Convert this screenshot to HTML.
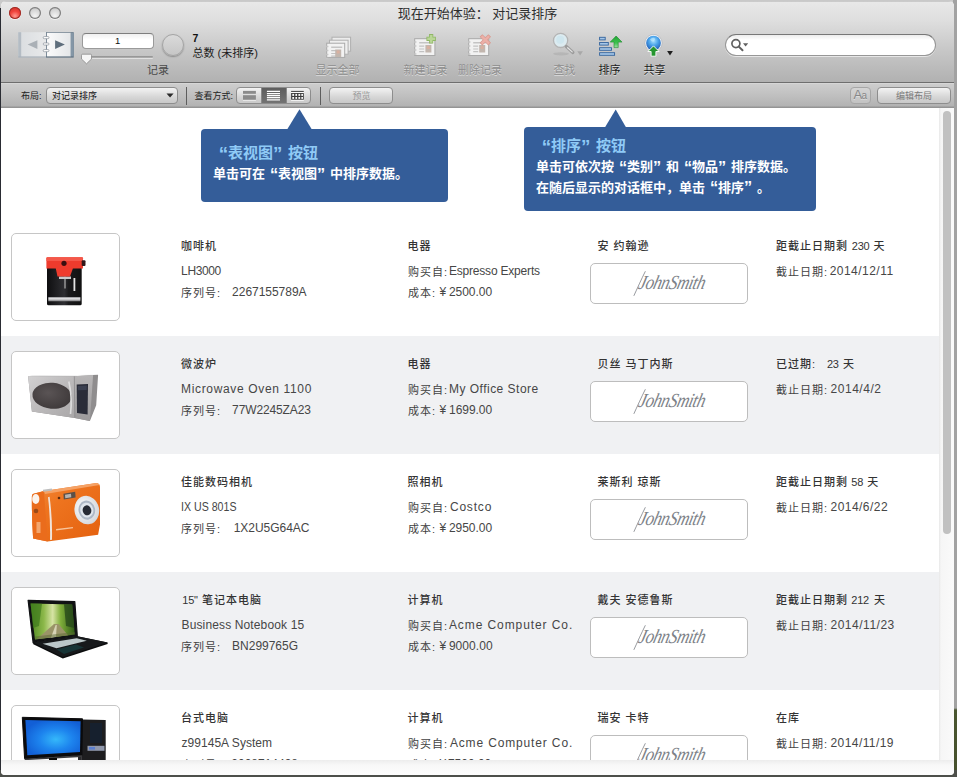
<!DOCTYPE html><html lang="zh-CN"><head><meta charset="utf-8"><title>现在开始体验： 对记录排序</title><style>
*{box-sizing:border-box}
html,body{margin:0;padding:0}
body{width:957px;height:777px;overflow:hidden;position:relative;background:#9f9f9f;font-family:"Liberation Sans","Noto Sans CJK SC",sans-serif;color:#333}
.abs{position:absolute}
#bgtop{left:0;top:0;width:957px;height:8px;background:#c9c9c9}
#bgleft{left:0;top:8px;width:2px;height:769px;background:#2a2c33}
#bgright{left:953px;top:0;width:4px;height:777px;background:linear-gradient(#a2a2a2 0,#a2a2a2 708px,#4a5630 710px,#46502c 777px)}
#bgbot{left:0;top:770px;width:957px;height:7px;background:#4d4f4a}
#win{left:1px;top:1px;width:953px;height:774px;border-radius:5px 5px 4px 4px;overflow:hidden;background:#fff}
#tb{left:0;top:0;width:953px;height:81px;background:linear-gradient(#bcbcbc 0,#e8e8e8 1.5px,#dedede 20px,#c8c8c8 48px,#b1b1b1 81px)}
#tbline{left:0;top:81px;width:953px;height:1px;background:#6e6e6e}
#lb{left:0;top:82px;width:953px;height:25px;background:linear-gradient(#cdcdcd 0,#bfbfbf 12px,#b3b3b3 21.500px,#8c8c8c 24px);border-top:1px solid #d6d6d6}
#content{left:0;top:107px;width:938px;height:652px;background:#fff;overflow:hidden}
#sb{left:938px;top:107px;width:15px;height:652px;background:linear-gradient(90deg,#e8e8e8 0,#f6f6f6 2px,#fafafa 100%)}
#thumb{left:942px;top:110px;width:8px;height:423px;border-radius:4px;background:#c1c1c1}
#foot{left:0;top:759px;width:953px;height:15px;background:linear-gradient(#ececec 0,#f8f8f8 5px,#fdfdfd 15px)}
.tl{width:12px;height:12px;border-radius:50%;top:6px}
.t{position:absolute;white-space:nowrap;line-height:16px;height:16px}
.row{position:absolute;left:0;width:938px;height:118px}
.row.g{background:#f0f1f3}
.pic{position:absolute;left:10px;top:15px;width:109px;height:88px;border:1px solid #c6c6c6;border-radius:5px;background:#fff;overflow:hidden}
.h{font-weight:500;font-size:11px;letter-spacing:1px;color:#333}
.c{font-size:11px;letter-spacing:1px;color:#424242}
.n{font-weight:400;font-size:12px;letter-spacing:0;font-family:"Liberation Sans",sans-serif}
.b{font-size:12px;color:#464646}
.s11{font-size:11px;color:#333}
.sigbox{position:absolute;left:589px;top:45px;width:158px;height:41px;border:1px solid #bdbdbd;border-radius:5px;background:#fff}
.sig{position:absolute;left:34px;top:1px}
.co{position:absolute;background:#345d99;border-radius:4px}
.coh{position:absolute;white-space:nowrap;font-weight:700;font-size:15px;color:#8fcaf6;line-height:20px}
.cob{position:absolute;white-space:nowrap;font-weight:700;font-size:13px;color:#fff;line-height:18px}
.lab{position:absolute;white-space:nowrap;font-size:11px;line-height:14px;color:#222}
.dis{color:#8e8e8e}
.btn{position:absolute;border:1px solid #8d8d8d;border-radius:4px;background:linear-gradient(#f3f3f3,#d6d6d6 60%,#c8c8c8);}
.ql{display:inline-block;width:.8em;text-align:right;font-size:1.25em;line-height:0;position:relative;top:.12em}
.qr{display:inline-block;width:.8em;text-align:left;font-size:1.25em;line-height:0;position:relative;top:.12em}
.tsh{text-shadow:0 1px 0 rgba(255,255,255,.55)}
.sm{position:absolute;white-space:nowrap;font-size:9px;line-height:12px;color:#222}
</style></head><body>
<div id="bgtop" class="abs"></div><div id="bgleft" class="abs"></div><div id="bgright" class="abs"></div><div id="bgbot" class="abs"></div>
<div id="win" class="abs">
<div id="tb" class="abs"></div><div id="tbline" class="abs"></div><div id="lb" class="abs"></div>
<div class="abs tl" style="left:8px;top:5.700px;background:radial-gradient(circle at 50% 75%,#ff9a90 0,#f0443c 45%,#c62a24 100%);box-shadow:0 0 0 1px #9b2f29 inset,0 1px 0 rgba(255,255,255,.55)"></div>
<div class="abs tl" style="left:28px;top:5.700px;background:radial-gradient(circle at 50% 75%,#f4f4f4 0,#d6d6d6 55%,#bdbdbd 100%);box-shadow:0 0 0 1.200px #7f7f7f inset,0 1px 0 rgba(255,255,255,.55)"></div>
<div class="abs tl" style="left:48px;top:5.700px;background:radial-gradient(circle at 50% 75%,#f4f4f4 0,#d6d6d6 55%,#bdbdbd 100%);box-shadow:0 0 0 1.200px #7f7f7f inset,0 1px 0 rgba(255,255,255,.55)"></div>
<div class="abs" id="title" style="left:0;top:3px;width:953px;text-align:center;font-size:13px;line-height:19px;color:#2e2e2e;white-space:nowrap">现在开始体验： 对记录排序</div>
<!-- book nav -->
<svg class="abs" style="left:16px;top:30px" width="60" height="30" viewBox="0 0 60 30">
<defs><linearGradient id="pgL" x1="0" x2="1"><stop offset="0" stop-color="#dadde0"/><stop offset="1" stop-color="#e8e9ea"/></linearGradient>
<linearGradient id="pgR" x1="0" x2="1"><stop offset="0" stop-color="#fbfbfb"/><stop offset="1" stop-color="#e4e6e8"/></linearGradient></defs>
<rect x="1.200" y="1.200" width="28" height="25" fill="url(#pgL)"/>
<rect x="1.200" y="1.200" width="3" height="25" fill="#b4bcc4"/>
<rect x="1.200" y="25.400" width="28" height="1.200" fill="#aab2ba"/>
<rect x="29" y="1.200" width="27.700" height="25.400" fill="#5e7080"/>
<rect x="29.800" y="1.800" width="24" height="23.600" fill="url(#pgR)"/>
<rect x="53.800" y="1.800" width="2.900" height="23.600" fill="#8496a6"/>
<polygon points="10.600,13.600 20.400,9.200 20.400,18" fill="#aab0b6"/>
<polygon points="47.900,13.600 38.100,9.200 38.100,18" fill="#5f6e7c"/>
<rect x="26.200" y="5.5" width="5.800" height="2.200" rx="1.100" fill="#fafafa" stroke="#8c949c" stroke-width="0.700"/>
<rect x="26.200" y="11.9" width="5.800" height="2.200" rx="1.100" fill="#fafafa" stroke="#8c949c" stroke-width="0.700"/>
<rect x="26.200" y="18.5" width="5.800" height="2.200" rx="1.100" fill="#fafafa" stroke="#8c949c" stroke-width="0.700"/>
</svg>
<!-- record field -->
<div class="abs" style="left:80.500px;top:32.200px;width:72.500px;height:15.500px;border:1px solid #9a9a9a;border-top-color:#7e7e7e;border-radius:4px;background:linear-gradient(#f0f0f0,#ffffff 40%);text-align:center;font-size:9.500px;line-height:13px;color:#111">1</div>
<div class="abs" style="left:80.500px;top:54.500px;width:71.500px;height:2.400px;border-radius:1.200px;background:linear-gradient(#8e8e8e,#b4b4b4);box-shadow:0 1px 0 rgba(255,255,255,.5)"></div>
<svg class="abs" style="left:79px;top:51px" width="14" height="13"><path d="M2.500 2.200 H10.500 Q11.500 2.200 11.500 3.200 V7 L6.500 11.800 L1.500 7 V3.200 Q1.500 2.200 2.500 2.200Z" fill="#f6f6f6" stroke="#8a8a8a" stroke-width="0.800"/></svg>
<div class="abs" style="left:160.800px;top:32.800px;width:22.400px;height:22.400px;border-radius:50%;background:linear-gradient(#dadada,#c6c6c6);border:1px solid #a4a4a4;box-shadow:0 1px 1.500px rgba(0,0,0,.28)"></div>
<div class="lab" style="left:191.500px;top:30px;font-weight:700;font-size:10.500px;color:#111">7</div>
<div class="lab" style="left:191.500px;top:44.500px;color:#1c1c1c">总数 (未排序)</div>
<div class="lab" style="left:146px;top:61.500px;color:#4a4a4a">记录</div>
<!-- toolbar buttons -->
<div class="lab dis tsh" style="left:314.500px;top:62px">显示全部</div>
<div class="lab dis tsh" style="left:402.500px;top:62px">新建记录</div>
<div class="lab dis tsh" style="left:457px;top:62px">删除记录</div>
<div class="lab dis tsh" style="left:552.500px;top:62px">查找</div>
<div class="lab tsh" style="left:597.500px;top:62px;color:#1a1a1a">排序</div>
<div class="lab tsh" style="left:642.500px;top:62px;color:#1a1a1a">共享</div>
<!-- icon: show all -->
<svg class="abs" style="left:322px;top:31px" width="32" height="28" viewBox="0 0 32 28">
<rect x="9" y="5.200" width="18.600" height="14" fill="#ececec" stroke="#b0b0b0" stroke-width="1"/>
<rect x="6.500" y="8.200" width="18.600" height="14" fill="#efefef" stroke="#b0b0b0" stroke-width="1"/>
<rect x="3.7" y="11.2" width="18" height="14.2" fill="#f2f2f2" stroke="#a9a9a9" stroke-width="1"/>
<path d="M8.2 15.2h11" stroke="#c4c4c4" stroke-width="1.400"/>
<path d="M8.2 18.7h5M8.2 21.5h5M8.2 24.2h5" stroke="#c2c2c2" stroke-width="1.200"/>
<rect x="12.2" y="17.5" width="6" height="7.500" fill="#c2b6ae"/>
<rect x="13.7" y="18.5" width="3" height="3" fill="#d8b0a0"/>
<path d="M3.2 14.5h2.200M3.2 18.5h2.200M3.2 22.5h2.200M3.2 26.5h2.200" stroke="#c6c6c6" stroke-width="1.600"/>
</svg>
<!-- icon: new record -->
<svg class="abs" style="left:411px;top:31px" width="28" height="27" viewBox="0 0 28 27">
<rect x="2.7" y="6.7" width="20.2" height="16.8" fill="#f2f2f2" stroke="#a9a9a9" stroke-width="1"/>
<path d="M7.2 10.7h13.2" stroke="#c4c4c4" stroke-width="1.400"/>
<path d="M7.2 14.2h5M7.2 17.0h5M7.2 19.7h5" stroke="#c2c2c2" stroke-width="1.200"/>
<rect x="13.399999999999999" y="13.0" width="6" height="7.500" fill="#c2b6ae"/>
<rect x="14.899999999999999" y="14.0" width="3" height="3" fill="#d8b0a0"/>
<path d="M2.2 10.0h2.200M2.2 14.0h2.200M2.2 18.0h2.200M2.2 22.0h2.200" stroke="#c6c6c6" stroke-width="1.600"/>
<path d="M19.150 2.100v9.400M14.450 6.800h9.400" stroke="#8fb765" stroke-width="4.200"/>
<path d="M19.150 2.900v7.800M15.250 6.800h7.800" stroke="#b9d696" stroke-width="2.600"/>
</svg>
<!-- icon: delete record -->
<svg class="abs" style="left:465px;top:31px" width="28" height="27" viewBox="0 0 28 27">
<rect x="2.7" y="6.7" width="20" height="16.8" fill="#f2f2f2" stroke="#a9a9a9" stroke-width="1"/>
<path d="M7.2 10.7h13" stroke="#c4c4c4" stroke-width="1.400"/>
<path d="M7.2 14.2h5M7.2 17.0h5M7.2 19.7h5" stroke="#c2c2c2" stroke-width="1.200"/>
<rect x="13.2" y="13.0" width="6" height="7.500" fill="#c2b6ae"/>
<rect x="14.7" y="14.0" width="3" height="3" fill="#d8b0a0"/>
<path d="M2.2 10.0h2.200M2.2 14.0h2.200M2.2 18.0h2.200M2.2 22.0h2.200" stroke="#c6c6c6" stroke-width="1.600"/>
<path d="M15 3.500l8.700 8.700M23.700 3.500l-8.700 8.700" stroke="#d99a90" stroke-width="3.800"/>
<path d="M15.600 4.100l7.500 7.500M23.100 4.100l-7.500 7.500" stroke="#ecb0a8" stroke-width="2.300"/>
</svg>
<!-- icon: find -->
<svg class="abs" style="left:549px;top:30px" width="36" height="28" viewBox="0 0 36 28">
<ellipse cx="11" cy="22.800" rx="8" ry="1.600" fill="#9a9a9a" opacity="0.35"/>
<circle cx="10.600" cy="9.400" r="7.100" fill="#dcebf0" stroke="#b4b4b4" stroke-width="1.300"/>
<circle cx="10.200" cy="8.800" r="4" fill="#cfe6ee"/>
<path d="M16.300 15.500l6.600 6" stroke="#9c9c9c" stroke-width="3.200" stroke-linecap="round"/>
<path d="M17.600 16.700l4.600 4.200" stroke="#e4e4e4" stroke-width="1.200" stroke-linecap="round"/>
<polygon points="27.300,20.200 32.900,20.200 30.100,24.400" fill="#a8a8a8"/>
</svg>
<!-- icon: sort -->
<svg class="abs" style="left:595px;top:31px" width="30" height="27" viewBox="0 0 30 27">
<defs><linearGradient id="ga" x1="0" y1="0" x2="0" y2="1"><stop offset="0" stop-color="#22a336"/><stop offset="0.6" stop-color="#3fc24f"/><stop offset="1" stop-color="#9fe0a6"/></linearGradient></defs>
<g fill="#a5c6e8" stroke="#33639c" stroke-width="0.900">
<rect x="3.600" y="5.300" width="5.600" height="2.600"/><rect x="3.600" y="10.500" width="8.700" height="2.600"/><rect x="3.600" y="15.700" width="11.900" height="2.600"/><rect x="3.600" y="20.700" width="15" height="2.600"/></g>
<path d="M20.100 4 L26 10.100 H22.200 V15.600 H18 V10.100 H14.200 Z" fill="url(#ga)" stroke="#1f8a2e" stroke-width="0.600"/>
</svg>
<!-- icon: share -->
<svg class="abs" style="left:640px;top:30px" width="36" height="28" viewBox="0 0 36 28">
<defs><radialGradient id="gl" cx="0.5" cy="0.35" r="0.7"><stop offset="0" stop-color="#a9e2ff"/><stop offset="0.45" stop-color="#4aa3ea"/><stop offset="1" stop-color="#1b52ad"/></radialGradient></defs>
<circle cx="12.500" cy="12.050" r="8.600" fill="#f4f6f8" stroke="#a9adb3" stroke-width="0.600"/>
<circle cx="12.500" cy="12.050" r="7.400" fill="url(#gl)"/>
<path d="M9 8.500 q2 -2.500 4.500 -1.500 q1.500 1.500 -0.500 3 q-2.500 1.500 -4 -1.500z" fill="#c9efff" opacity="0.55"/>
<path d="M12.500 14.900 L18.100 20.500 H14.900 V25.200 H10.100 V20.500 H6.900 Z" fill="#25962f" stroke="#ffffff" stroke-width="0.900" stroke-linejoin="round"/>
<polygon points="26.100,20 31.900,20 29,24.400" fill="#1e1e1e"/>
</svg>
<!-- search field -->
<div class="abs" style="left:723.700px;top:33.400px;width:211.300px;height:21.200px;border-radius:11px;border:1px solid #979797;border-top-color:#777;background:linear-gradient(#ececec 0,#ffffff 5px);box-shadow:0 1px 0 rgba(255,255,255,.6)"></div>
<svg class="abs" style="left:729px;top:36px" width="20" height="16" viewBox="0 0 20 16"><circle cx="5.900" cy="6.600" r="4" fill="none" stroke="#606060" stroke-width="1.700"/><path d="M8.800 9.600l3.700 3.700" stroke="#606060" stroke-width="2" stroke-linecap="round"/><polygon points="13,6.300 18.200,6.300 15.600,9.400" fill="#606060"/></svg>

<div class="sm" style="left:20px;top:89px">布局:</div>
<div class="btn" style="left:44.800px;top:86.300px;width:132.400px;height:16.500px"></div>
<div class="sm" style="left:51px;top:89px;color:#111">对记录排序</div>
<svg class="abs" style="left:164px;top:91px" width="10" height="7"><polygon points="1.500,1.600 8.600,1.600 5.050,5.400" fill="#2a2a2a"/></svg>
<div class="abs" style="left:184.500px;top:86px;width:1px;height:18px;background:#5d5d5d"></div>
<div class="sm" style="left:193.500px;top:89px">查看方式:</div>
<div class="btn" style="left:234.800px;top:86.300px;width:75.600px;height:16.500px;overflow:hidden">
 <div class="abs" style="left:25.200px;top:-1px;width:23.800px;height:17px;background:linear-gradient(#5c5c5c,#747474)"></div>
 <div class="abs" style="left:24.600px;top:-1px;width:0.700px;height:17px;background:#8a8a8a"></div>
 <div class="abs" style="left:49px;top:-1px;width:0.700px;height:17px;background:#8a8a8a"></div>
</div>
<svg class="abs" style="left:235px;top:86px" width="76" height="18" viewBox="0 0 76 18">
<rect x="7" y="3.900" width="12.900" height="2.900" fill="#8b8b8b"/><rect x="7" y="8.200" width="12.900" height="4.500" fill="#8b8b8b"/>
<rect x="7" y="13" width="12.900" height="0.800" fill="#f2f2f2" opacity="0.9"/>
<path d="M30.900 4.450h13.100M30.900 6.550h13.100M30.900 8.650h13.100M30.900 10.650h13.100M30.900 12.750h13.100" stroke="#ffffff" stroke-width="1.250"/>
<rect x="55.100" y="3.900" width="12.700" height="8.800" fill="#fafafa"/>
<rect x="55.100" y="3.900" width="12.700" height="1" fill="#3a3a3a"/>
<rect x="55.100" y="6" width="12.700" height="6.700" fill="#3a3a3a"/>
<g fill="#f6f6f6"><rect x="56.300" y="6.900" width="1.800" height="2"/><rect x="59.400" y="6.900" width="1.700" height="2"/><rect x="62.400" y="6.900" width="1.800" height="2"/><rect x="65.300" y="6.900" width="1.700" height="2"/>
<rect x="56.300" y="10" width="1.800" height="1.900"/><rect x="59.400" y="10" width="1.700" height="1.900"/><rect x="62.400" y="10" width="1.800" height="1.900"/><rect x="65.300" y="10" width="1.700" height="1.900"/></g>
<rect x="55.100" y="13" width="12.700" height="0.800" fill="#ffffff" opacity="0.9"/>
</svg>
<div class="abs" style="left:318.500px;top:86px;width:1px;height:18px;background:#5d5d5d"></div>
<div class="btn" style="left:327.500px;top:86.300px;width:64.500px;height:16.500px"></div>
<div class="sm" style="left:351.500px;top:89px;color:#9a9a9a">预览</div>
<div class="btn" style="left:848.500px;top:86.300px;width:21.500px;height:16.500px;background:linear-gradient(#d4d4d4,#c2c2c2);border-color:#a6a6a6"></div>
<div class="sm" style="left:852.500px;top:87px;font-size:13px;line-height:14px;color:#878787;letter-spacing:-0.700px;text-shadow:0 1px 0 rgba(255,255,255,.4)">A<span style="font-size:10px">a</span></div>
<div class="btn" style="left:875.500px;top:86.300px;width:74.500px;height:16.500px"></div>
<div class="sm" style="left:895px;top:89px;font-size:9px;color:#7a7a7a">编辑布局</div>

<div id="content" class="abs">
<div class="co" style="left:200px;top:21px;width:247px;height:73px"></div>
<svg class="abs" style="left:280px;top:0" width="40" height="24"><polygon points="18.500,1.300 5.800,22 31.200,22" fill="#345d99"/></svg>
<div class="coh" style="left:212px;top:35px"><span class="ql">“</span>表视图<span class="qr">”</span>按钮</div>
<div class="cob" style="left:212px;top:57px">单击可在<span class="ql">“</span>表视图<span class="qr">”</span>中排序数据。</div>
<div class="co" style="left:523px;top:19px;width:292px;height:84px"></div>
<svg class="abs" style="left:596px;top:0" width="40" height="22"><polygon points="18.700,1.400 7.600,20 29.400,20" fill="#345d99"/></svg>
<div class="coh" style="left:535px;top:28px"><span class="ql">“</span>排序<span class="qr">”</span>按钮</div>
<div class="cob" style="left:535px;top:50px">单击可依次按<span class="ql">“</span>类别<span class="qr">”</span>和<span class="ql">“</span>物品<span class="qr">”</span>排序数据。</div>
<div class="cob" style="left:535px;top:70.500px">在随后显示的对话框中，单击<span class="ql">“</span>排序<span class="qr">”</span>。</div>

<div class="row" style="top:110px">
<div class="pic"><svg width="107" height="86" viewBox="0 0 107 86">
<defs><linearGradient id="cfb" x1="0" x2="1"><stop offset="0" stop-color="#0e0e10"/><stop offset="0.5" stop-color="#2e2e32"/><stop offset="0.62" stop-color="#1a1a1c"/><stop offset="1" stop-color="#111"/></linearGradient>
<linearGradient id="cft" x1="0" y1="0" x2="0" y2="1"><stop offset="0" stop-color="#8a8a8e"/><stop offset="0.4" stop-color="#e8e8ea"/><stop offset="1" stop-color="#77777a"/></linearGradient></defs>
<rect x="35" y="33" width="34.700" height="38.200" rx="1.500" fill="url(#cfb)"/>
<rect x="36.300" y="63" width="32.100" height="4.300" fill="url(#cft)"/>
<rect x="61.500" y="44" width="1.800" height="13" fill="#e4e4e4"/>
<rect x="52" y="42.500" width="2" height="12" fill="#8e8e90" opacity="0.8"/>
<path d="M47 42.500h12v2.500h-12z" fill="#c9c9cb"/>
<path d="M34.400 24.300 Q34.400 23.300 35.400 23.300 H70 Q71 23.300 71 24.300 V34.600 H60.900 L58 42.600 H45.500 L43.800 34.600 H34.400Z" fill="#ee3b2d"/>
<path d="M34.400 24.300 Q34.400 23.300 35.400 23.300 H70 Q71 23.300 71 24.300 V27 H34.400Z" fill="#f4584a"/>
<rect x="69.700" y="26.200" width="3.800" height="5.700" rx="1" fill="#33181a"/>
<circle cx="52" cy="29.300" r="2.600" fill="#3a0f10"/>
</svg></div>
<div class="t h" style="left:180px;top:20px">咖啡机</div>
<div id="r0model" class="t b" style="left:180.10px;top:45px;letter-spacing:-0.380px">LH3000</div>
<div class="t c" style="left:180px;top:67px">序列号:</div>
<div id="r0sn" class="t b" style="left:231.10px;top:66px;letter-spacing:-0.030px">2267155789A</div>
<div class="t h" style="left:406.500px;top:20px">电器</div>
<div class="t c" style="left:407px;top:46px">购买自:</div>
<div id="r0shop" class="t b" style="left:447.90px;top:45px;letter-spacing:-0.194px">Espresso Experts</div>
<div class="t c" style="left:407px;top:67px">成本:</div><div class="t b" style="left:438.500px;top:66px">¥</div>
<div id="r0cost" class="t b" style="left:447.90px;top:66px;letter-spacing:-0.016px">2500.00</div>
<div class="t h" style="left:596.500px;top:20px">安 约翰逊</div>
<div class="sigbox"><svg class="sig" width="90" height="36" viewBox="0 0 90 36"><path d="M9 30.500 C12 24 16.500 14 20.200 6.600" fill="none" stroke="#6a6f75" stroke-width="0.700" stroke-linecap="round"/><text x="12.500" y="24" font-family="Liberation Serif, serif" font-style="italic" font-size="20" fill="#7d8288" letter-spacing="-0.700" word-spacing="-4" transform="skewX(-14) translate(6 0)" textLength="66" lengthAdjust="spacingAndGlyphs">John Smith</text></svg></div>
<div class="t h" style="left:775px;top:20px">距截止日期剩</div>
<div id="r0num" class="t b s11" style="left:850.80px;top:19.5px;letter-spacing:-0.250px">230</div>
<div class="t h" style="left:872.5px;top:20px">天</div>
<div class="t c" style="left:775px;top:46px">截止日期:</div>
<div id="r0date" class="t b" style="left:828.70px;top:45px;letter-spacing:0.468px">2014/12/11</div>
</div>
<div class="row g" style="top:228px">
<div class="pic"><svg width="107" height="86" viewBox="0 0 107 86">
<defs><linearGradient id="mwf" x1="0" y1="0" x2="1" y2="1"><stop offset="0" stop-color="#d2d1d2"/><stop offset="0.5" stop-color="#bcbabb"/><stop offset="1" stop-color="#a9a7a8"/></linearGradient>
<linearGradient id="mwc" x1="0" y1="0" x2="0" y2="1"><stop offset="0" stop-color="#b8b6b7"/><stop offset="1" stop-color="#9c9a9b"/></linearGradient>
<radialGradient id="mwd" cx="0.4" cy="0.4" r="0.7"><stop offset="0" stop-color="#5a5455"/><stop offset="1" stop-color="#3c3738"/></radialGradient></defs>
<polygon points="16.100,24.300 62.100,24.300 81.100,23 86.100,22.800 84.200,53.300 77.900,69.100 62.800,65.900 19.900,59.600" fill="#8f8d8e"/>
<polygon points="16.100,24.300 62.100,24.300 62.800,65.900 19.900,59.600" fill="url(#mwf)"/>
<polygon points="62.100,24.300 81.100,23 77.900,69.100 62.800,65.900" fill="url(#mwc)"/>
<polygon points="16.100,24.300 81.100,23 86.100,22.800 20,23.600" fill="#dcdcdc"/>
<ellipse cx="40" cy="43.800" rx="19.600" ry="13" transform="rotate(5 40 43.800)" fill="url(#mwd)"/>
<path d="M56.800 29.500 Q60.500 45 58.500 62" fill="none" stroke="#dedede" stroke-width="1.600"/>
<path d="M62.300 24.300 L62.900 65.900" stroke="#8a8889" stroke-width="0.700"/>
<polygon points="64.700,32.500 76,32 75.600,62.600 65,61" fill="#2a2c38"/>
<polygon points="65.800,34 74.800,33.600 74.700,38 65.900,38.300" fill="#3b4050"/>
</svg></div>
<div class="t h" style="left:180px;top:20px">微波炉</div>
<div id="r1model" class="t b" style="left:180.10px;top:45px;letter-spacing:0.652px">Microwave Oven 1100</div>
<div class="t c" style="left:180px;top:67px">序列号:</div>
<div id="r1sn" class="t b" style="left:231.10px;top:66px;letter-spacing:-0.130px">77W2245ZA23</div>
<div class="t h" style="left:406.500px;top:20px">电器</div>
<div class="t c" style="left:407px;top:46px">购买自:</div>
<div id="r1shop" class="t b" style="left:447.90px;top:45px;letter-spacing:0.494px">My Office Store</div>
<div class="t c" style="left:407px;top:67px">成本:</div><div class="t b" style="left:438.500px;top:66px">¥</div>
<div id="r1cost" class="t b" style="left:448.10px;top:66px;letter-spacing:-0.066px">1699.00</div>
<div class="t h" style="left:596.500px;top:20px">贝丝 马丁内斯</div>
<div class="sigbox"><svg class="sig" width="90" height="36" viewBox="0 0 90 36"><path d="M9 30.500 C12 24 16.500 14 20.200 6.600" fill="none" stroke="#6a6f75" stroke-width="0.700" stroke-linecap="round"/><text x="12.500" y="24" font-family="Liberation Serif, serif" font-style="italic" font-size="20" fill="#7d8288" letter-spacing="-0.700" word-spacing="-4" transform="skewX(-14) translate(6 0)" textLength="66" lengthAdjust="spacingAndGlyphs">John Smith</text></svg></div>
<div class="t h" style="left:775px;top:20px">已过期:</div>
<div id="r1num" class="t b s11" style="left:826.00px;top:19.5px;letter-spacing:-0.250px">23</div>
<div class="t h" style="left:842.1px;top:20px">天</div>
<div class="t c" style="left:775px;top:46px">截止日期:</div>
<div id="r1date" class="t b" style="left:829.50px;top:45px;letter-spacing:0.542px">2014/4/2</div>
</div>
<div class="row" style="top:346px">
<div class="pic"><svg width="107" height="86" viewBox="0 0 107 86">
<defs><linearGradient id="cmb" x1="0" y1="0" x2="1" y2="1"><stop offset="0" stop-color="#f08a3c"/><stop offset="0.35" stop-color="#ee741f"/><stop offset="1" stop-color="#e4610f"/></linearGradient>
<radialGradient id="cml" cx="0.4" cy="0.4" r="0.7"><stop offset="0" stop-color="#ffffff"/><stop offset="1" stop-color="#cfd3d8"/></radialGradient></defs>
<path d="M21.500 23.700 L31.900 21.100 L84.500 12.900 Q88 13.500 88 17 V54.600 L86.100 64.700 L35.600 71.600 L21.100 68.400 Q19.600 46 19.900 26 Q20 24 21.500 23.700Z" fill="url(#cmb)"/>
<path d="M19.900 26 Q20 24 21.500 23.700 L31.900 21.100 L35.600 71.600 L21.100 68.400 Q19.600 46 19.900 26Z" fill="#ea6c1c"/>
<path d="M31.900 21.100 L84.500 12.900 Q87 13.200 87.600 15 L33 24Z" fill="#f5a266"/>
<ellipse cx="23.800" cy="29" rx="3.600" ry="5" fill="#fbf3ec"/>
<path d="M37.600 26.800 Q40.500 48 40 69.700 L38 70 Q38.500 48 36 27.200Z" fill="#efe3da"/>
<rect x="24.500" y="52" width="4" height="11" fill="#f3a66e"/>
<circle cx="24" cy="41" r="2.300" fill="#9a4a18"/>
<rect x="31" y="19.200" width="9" height="2" fill="#bdbdbd" transform="rotate(-8 35 20)"/>
<ellipse cx="74.800" cy="40.100" rx="12.300" ry="14.300" transform="rotate(-12 74.800 40.100)" fill="url(#cml)"/>
<ellipse cx="74.800" cy="40.100" rx="8.300" ry="9.600" transform="rotate(-12 74.800 40.100)" fill="#aeb8c6"/>
<ellipse cx="74.800" cy="40.100" rx="6.500" ry="7.500" transform="rotate(-12 74.800 40.100)" fill="#dfe5ec"/>
<ellipse cx="75" cy="40.300" rx="4.300" ry="5" transform="rotate(-12 75 40.300)" fill="#262a34"/>
<polygon points="51.400,23.800 63.200,21.800 63.600,27.600 51.800,29.400" fill="#5c5048"/>
<polygon points="53,24.800 59,23.800 59.300,27.300 53.300,28.200" fill="#b7b3b0"/>
<circle cx="47" cy="28" r="1.300" fill="#5a2a10"/>
<rect x="44" y="59" width="17" height="1.400" fill="#f7c39a" transform="rotate(-7 44 59)"/>
</svg></div>
<div class="t h" style="left:180px;top:20px">佳能数码相机</div>
<div id="r2model" class="t b" style="left:180px;top:45px;transform-origin:0 50%;transform:scaleX(0.885)">IX US 801S</div>
<div class="t c" style="left:180px;top:67px">序列号:</div>
<div id="r2sn" class="t b" style="left:232.70px;top:66px;letter-spacing:-0.024px">1X2U5G64AC</div>
<div class="t h" style="left:406.500px;top:20px">照相机</div>
<div class="t c" style="left:407px;top:46px">购买自:</div>
<div id="r2shop" class="t b" style="left:448.90px;top:45px;letter-spacing:0.820px">Costco</div>
<div class="t c" style="left:407px;top:67px">成本:</div><div class="t b" style="left:438.500px;top:66px">¥</div>
<div id="r2cost" class="t b" style="left:447.90px;top:66px;letter-spacing:-0.016px">2950.00</div>
<div class="t h" style="left:596.500px;top:20px">莱斯利 琼斯</div>
<div class="sigbox"><svg class="sig" width="90" height="36" viewBox="0 0 90 36"><path d="M9 30.500 C12 24 16.500 14 20.200 6.600" fill="none" stroke="#6a6f75" stroke-width="0.700" stroke-linecap="round"/><text x="12.500" y="24" font-family="Liberation Serif, serif" font-style="italic" font-size="20" fill="#7d8288" letter-spacing="-0.700" word-spacing="-4" transform="skewX(-14) translate(6 0)" textLength="66" lengthAdjust="spacingAndGlyphs">John Smith</text></svg></div>
<div class="t h" style="left:775px;top:20px">距截止日期剩</div>
<div id="r2num" class="t b s11" style="left:850.30px;top:19.5px;letter-spacing:-0.250px">58</div>
<div class="t h" style="left:866.3px;top:20px">天</div>
<div class="t c" style="left:775px;top:46px">截止日期:</div>
<div id="r2date" class="t b" style="left:829.50px;top:45px;letter-spacing:0.466px">2014/6/22</div>
</div>
<div class="row g" style="top:464px">
<div class="pic"><svg width="107" height="86" viewBox="0 0 107 86">
<defs><linearGradient id="lps" x1="0" y1="0" x2="1" y2="0"><stop offset="0" stop-color="#4f8a22"/><stop offset="0.3" stop-color="#8cb84a"/><stop offset="0.5" stop-color="#d6e3a4"/><stop offset="0.68" stop-color="#7fae3a"/><stop offset="1" stop-color="#2f5a16"/></linearGradient></defs>
<polygon points="16.100,12.300 62.800,13.600 65.300,48.300 21.100,54.600" fill="#111214" stroke="#111214" stroke-width="1.200" stroke-linejoin="round"/>
<polygon points="18.600,15.500 60.200,16.500 62.800,46.400 23,51.400" fill="url(#lps)"/>
<polygon points="18.600,15.500 30,15.800 27,38 21,40" fill="#3f7a1c" opacity="0.7"/>
<polygon points="52,16.300 60.200,16.500 62.200,40 54,38" fill="#27481a" opacity="0.8"/>
<polygon points="42,36 46.500,36 56,47.200 25,51.100" fill="#9a9468"/>
<polygon points="43.600,37 44.800,37 44,49 39,49.500" fill="#d6d2b4"/>
<polygon points="23,51.400 62.800,46.400 62.600,44 22.600,48.500" fill="#5a6a34" opacity="0.5"/>
<polygon points="21.100,54.600 65.300,48.300 95.600,54.600 95.600,56 50.800,70.600 21.300,56.300" fill="#0c0d0e"/>
<polygon points="21.100,54.600 65.300,48.300 95.600,54.600 50.800,69.100" fill="#17191b"/>
<polygon points="30.600,55.800 64.700,50.200 74.800,52.700 44.500,60.200" fill="#bcc8ca"/>
<polygon points="44.500,61.500 64,56.500 72,59.500 52,66" fill="#173436"/>
</svg></div>
<div id="r3nm" class="t b s11" style="left:181.30px;top:19.5px;letter-spacing:-0.250px">15"</div>
<div class="t h" style="left:201px;top:20px">笔记本电脑</div>
<div id="r3model" class="t b" style="left:180.50px;top:45px;letter-spacing:0.134px">Business Notebook 15</div>
<div class="t c" style="left:180px;top:67px">序列号:</div>
<div id="r3sn" class="t b" style="left:231.10px;top:66px;letter-spacing:-0.016px">BN299765G</div>
<div class="t h" style="left:406.500px;top:20px">计算机</div>
<div class="t c" style="left:407px;top:46px">购买自:</div>
<div id="r3shop" class="t b" style="left:447.90px;top:45px;letter-spacing:0.915px">Acme Computer Co.</div>
<div class="t c" style="left:407px;top:67px">成本:</div><div class="t b" style="left:438.500px;top:66px">¥</div>
<div id="r3cost" class="t b" style="left:447.90px;top:66px;letter-spacing:0.048px">9000.00</div>
<div class="t h" style="left:596.500px;top:20px">戴夫 安德鲁斯</div>
<div class="sigbox"><svg class="sig" width="90" height="36" viewBox="0 0 90 36"><path d="M9 30.500 C12 24 16.500 14 20.200 6.600" fill="none" stroke="#6a6f75" stroke-width="0.700" stroke-linecap="round"/><text x="12.500" y="24" font-family="Liberation Serif, serif" font-style="italic" font-size="20" fill="#7d8288" letter-spacing="-0.700" word-spacing="-4" transform="skewX(-14) translate(6 0)" textLength="66" lengthAdjust="spacingAndGlyphs">John Smith</text></svg></div>
<div class="t h" style="left:775px;top:20px">距截止日期剩</div>
<div id="r3num" class="t b s11" style="left:850.30px;top:19.5px;letter-spacing:-0.250px">212</div>
<div class="t h" style="left:873.0px;top:20px">天</div>
<div class="t c" style="left:775px;top:46px">截止日期:</div>
<div id="r3date" class="t b" style="left:829.50px;top:45px;letter-spacing:0.512px">2014/11/23</div>
</div>
<div class="row" style="top:582px">
<div class="pic"><svg width="107" height="86" viewBox="0 0 107 86">
<defs><radialGradient id="dks" cx="0.55" cy="0.55" r="0.6"><stop offset="0" stop-color="#35b8fa"/><stop offset="0.5" stop-color="#1d84ee"/><stop offset="1" stop-color="#125fd6"/></radialGradient></defs>
<polygon points="69.900,13.400 93.700,14 93.700,60 69.900,60" fill="#1d1d1f"/>
<polygon points="66,16 69.900,13.400 69.900,60 66,58" fill="#2a2a2d"/>
<rect x="78" y="17" width="12" height="20" fill="#16202e"/>
<rect x="75.500" y="39.800" width="17" height="5" fill="#9098ac"/>
<rect x="77" y="41" width="6" height="2.600" fill="#5b7fd0"/>
<polygon points="10.300,11.300 70.500,12.800 69.900,49.200 12.600,52.700" fill="#0b0b0d" stroke="#0b0b0d" stroke-width="1" stroke-linejoin="round"/>
<polygon points="13.400,14.100 68.600,15.300 68,46 15.300,49.200" fill="url(#dks)"/>
<polygon points="12.600,52.700 69.900,49.200 69.900,51 12.800,54.200" fill="#3a3a3c"/>
<rect x="37" y="52" width="8" height="6" fill="#0a0a0a"/>
</svg></div>
<div class="t h" style="left:180px;top:20px">台式电脑</div>
<div id="r4model" class="t b" style="left:180.50px;top:45px;letter-spacing:0.038px">z99145A System</div>
<div class="t c" style="left:180px;top:67px">序列号:</div>
<div id="r4sn" class="t b" style="left:230.30px;top:66px;letter-spacing:0.000px">2008714498</div>
<div class="t h" style="left:406.500px;top:20px">计算机</div>
<div class="t c" style="left:407px;top:46px">购买自:</div>
<div id="r4shop" class="t b" style="left:448.90px;top:45px;letter-spacing:0.853px">Acme Computer Co.</div>
<div class="t c" style="left:407px;top:67px">成本:</div><div class="t b" style="left:438.500px;top:66px">¥</div>
<div id="r4cost" class="t b" style="left:446.90px;top:66px;letter-spacing:0.000px">7500.00</div>
<div class="t h" style="left:596.500px;top:20px">瑞安 卡特</div>
<div class="sigbox"><svg class="sig" width="90" height="36" viewBox="0 0 90 36"><path d="M9 30.500 C12 24 16.500 14 20.200 6.600" fill="none" stroke="#6a6f75" stroke-width="0.700" stroke-linecap="round"/><text x="12.500" y="24" font-family="Liberation Serif, serif" font-style="italic" font-size="20" fill="#7d8288" letter-spacing="-0.700" word-spacing="-4" transform="skewX(-14) translate(6 0)" textLength="66" lengthAdjust="spacingAndGlyphs">John Smith</text></svg></div>
<div class="t h" style="left:775px;top:20px">在库</div>
<div class="t c" style="left:775px;top:46px">截止日期:</div>
<div id="r4date" class="t b" style="left:829.50px;top:45px;letter-spacing:0.420px">2014/11/19</div>
</div>
</div>
<div id="sb" class="abs"></div><div id="thumb" class="abs"></div><div id="foot" class="abs"></div>
</div></body></html>
